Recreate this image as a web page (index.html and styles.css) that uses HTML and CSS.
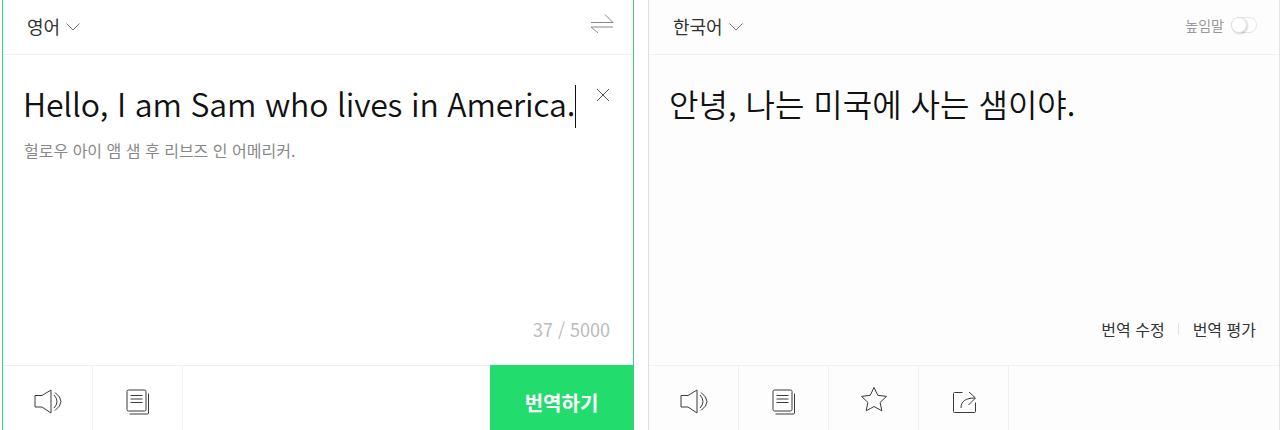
FILE: index.html
```html
<!DOCTYPE html>
<html lang="ko">
<head>
<meta charset="utf-8">
<title>번역</title>
<link rel="stylesheet" href="styles.css">
</head>
<body>
<main class="translator">
  <section class="panel panel-source">
    <header class="panel-head">
      <button class="lang"><span>영어</span>
        <svg class="chev" width="14" height="8" viewBox="0 0 14 8"><path d="M.5.5 7 7 13.5.5"/></svg>
      </button>
      <svg class="swap" width="24" height="21" viewBox="0 0 24 21"><path d="M1 9.500H23L15 1.500M23 14H1L8 20"/></svg>
    </header>
    <div class="panel-body">
      <div class="text-row">
        <p class="big-text source-text">Hello, I am Sam who lives in America.<span class="caret"></span></p>
        <svg class="clear" width="14" height="14" viewBox="0 0 14 14"><path d="M1 1l12 12M13 1 1 13"/></svg>
      </div>
      <p class="pron">헐로우 아이 앰 샘 후 리브즈 인 어메리커.</p>
      <div class="count">37 / 5000</div>
    </div>
    <footer class="panel-foot">
      <button class="tool"><svg width="28" height="25" viewBox="0 0 28 25"><path d="M1 6.500h7L17 1v23l-9-6H1zM20 6Q26 12.500 20 19M21 3.500Q33 12.500 21 21.500"/></svg></button>
      <button class="tool"><svg width="24" height="26" viewBox="0 0 24 26"><rect x="1" y="1" width="19" height="21" rx="1.500"/><path d="M4.500 6.500h12M4.500 10h12M4.500 13.500h12M22.500 4.500V24a1 1 0 0 1-1 1H3.500"/></svg></button>
      <button class="translate-btn">번역하기</button>
    </footer>
  </section>
  <section class="panel panel-target">
    <header class="panel-head">
      <button class="lang"><span>한국어</span>
        <svg class="chev" width="14" height="8" viewBox="0 0 14 8"><path d="M.5.5 7 7 13.5.5"/></svg>
      </button>
      <div class="honor"><span>높임말</span><span class="toggle"><span class="knob"></span></span></div>
    </header>
    <div class="panel-body">
      <p class="big-text target-text">안녕, 나는 미국에 사는 샘이야.</p>
      <div class="edit-links"><a>번역 수정</a><i class="link-sep"></i><a>번역 평가</a></div>
    </div>
    <footer class="panel-foot">
      <button class="tool"><svg width="28" height="25" viewBox="0 0 28 25"><path d="M1 6.500h7L17 1v23l-9-6H1zM20 6Q26 12.500 20 19M21 3.500Q33 12.500 21 21.500"/></svg></button>
      <button class="tool"><svg width="24" height="26" viewBox="0 0 24 26"><rect x="1" y="1" width="19" height="21" rx="1.500"/><path d="M4.500 6.500h12M4.500 10h12M4.500 13.500h12M22.500 4.500V24a1 1 0 0 1-1 1H3.500"/></svg></button>
      <button class="tool"><svg class="star" width="28" height="26" viewBox="0 0 28 26"><path d="M14 1.500l3.800 7.800 8.700 1.100-6.400 6 1.700 8.400-7.800-4.300-7.800 4.300 1.700-8.400-6.400-6 8.700-1.100z" stroke-linejoin="round"/></svg></button>
      <button class="tool"><svg width="24" height="22" viewBox="0 0 24 22"><path d="M10.500 1.500H2.500a1 1 0 0 0-1 1v18a1 1 0 0 0 1 1h20a1 1 0 0 0 1-1v-9M9 17C9 10 14 7 23 7M17 1l6.500 6-7 7"/></svg></button>
    </footer>
  </section>
</main>
</body>
</html>
```
FILE: styles.css
```css
* { box-sizing: border-box; }
html, body { margin: 0; padding: 0; height: 100%; background: #fff; overflow: hidden; }
body { font-family: "Noto Sans CJK KR", "Noto Sans", sans-serif; color: #222; }
p { margin: 0; }
button { font: inherit; color: inherit; background: none; border: 0; padding: 0; }
svg { display: block; fill: none; stroke: #3a3a3a; stroke-width: 1; }

.translator { display: flex; height: 440px; padding-left: 2px; gap: 14px; }
.panel { display: flex; flex-direction: column; height: 440px; }
.panel-source { width: 632px; border-left: 1px solid #2bd873; border-right: 1px solid #45c97c; }
.panel-target { flex: 1; background: #fdfdfd; border-left: 1px solid #ddd; border-right: 1px solid #e4e4e4; }

.panel-head { height: 55px; flex: none; display: flex; align-items: center; justify-content: space-between; border-bottom: 1px solid #f1f1f1; }
.panel-source .panel-head { padding: 0 19px 0 24px; }
.panel-target .panel-head { padding: 0 22px 0 24px; }
.lang { display: flex; align-items: center; gap: 6px; font-size: 18px; line-height: 26px; color: #333; margin-top: -2px; }
.chev { stroke: #777; margin-top: 1px; }
.swap { stroke: #888; margin-top: -8px; }

.panel-body { flex: 1; position: relative; }
.text-row { display: flex; justify-content: space-between; padding: 23px 23px 0 20px; }
.big-text { font-size: 32px; font-weight: 350; line-height: 50px; color: #111; white-space: nowrap; }
.source-text { letter-spacing: -0.19px; }
.target-text { padding: 23px 0 0 20px; }
.caret { display: inline-block; width: 1px; height: 43px; background: #111; vertical-align: -11px; }
.clear { stroke: #555; margin-top: 10px; }
.pron { font-size: 16px; line-height: 24px; color: #888; padding: 10px 0 0 21px; }
.count { position: absolute; right: 23px; bottom: 23px; font-size: 18px; line-height: 26px; color: #bbb; }
.edit-links { position: absolute; right: 23px; bottom: 24px; display: flex; align-items: center; font-size: 16px; line-height: 24px; color: #333; }
.link-sep { width: 1px; height: 12px; background: #e3e3e3; margin: 0 14px 0 13px; }

.honor { display: flex; align-items: center; gap: 7px; font-size: 14px; line-height: 20px; color: #999; margin-top: -4px; }
.toggle { position: relative; display: block; width: 26px; height: 16px; border: 1px solid #e6e6e6; border-radius: 8px; background: #fff; }
.knob { position: absolute; left: -1px; top: -1px; width: 16px; height: 16px; border-radius: 50%; background: #fff; border: 1px solid #e2e2e2; box-shadow: 1px 1px 2px rgba(0,0,0,.18); }

.panel-foot { height: 75px; flex: none; display: flex; border-top: 1px solid #f1f1f1; }
.tool { width: 90px; padding-bottom: 3px; display: flex; align-items: center; justify-content: center; border-right: 1px solid #f1f1f1; }
.star { margin-bottom: 6px; }
.translate-btn { margin-left: auto; width: 143px; background: #22dc6d; color: #fff; font-size: 20px; font-weight: 700; margin-top: -1px; }
```
